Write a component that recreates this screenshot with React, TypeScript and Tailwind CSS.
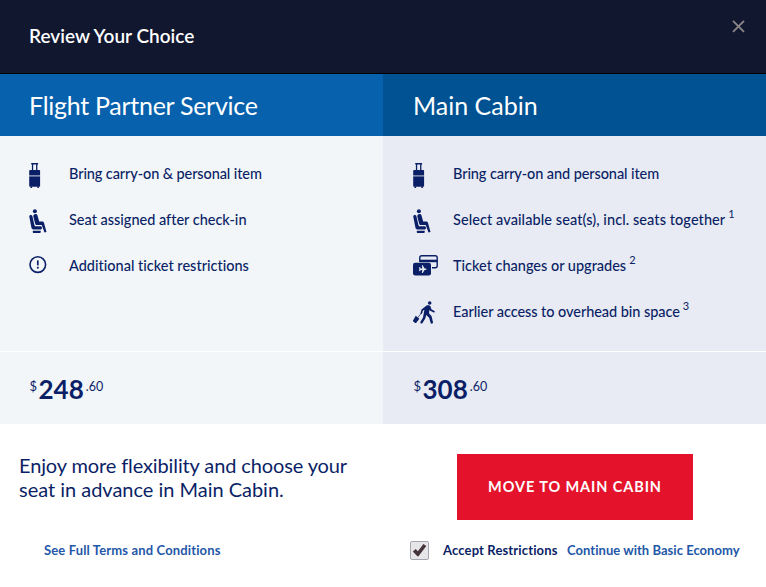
import { useState, type ReactNode } from "react";

function SuitcaseIcon() {
  return (
    <svg className="mt-[4px]" width="12" height="26" viewBox="0 0 12 26" fill="currentColor">
      <path d="M2.2 0h6.9v1.5h-.7V7H7.1V1.5H4.2V7H2.9V1.5h-.7z" />
      <path d="M1.4 7h8.7c.6 0 1 .4 1 1v4H.2V8c0-.6.6-1 1.2-1z" />
      <path d="M.2 13.6h10.9v9.2c0 .6-.4 1-1 1H1.4c-.6 0-1.2-.4-1.2-1z" />
      <path d="M1.5 23.5h1.6v1.5H1.5zM8.3 23.5h1.6v1.5H8.3z" />
      <path d="M.2 12h10.9v1.6H.2z" opacity=".5" />
    </svg>
  );
}

function SeatIcon() {
  return (
    <svg className="mt-[2px]" width="18" height="25" viewBox="0 0 18 25" fill="currentColor">
      <circle cx="5.9" cy="2.2" r="2" />
      <path d="M.3 7.7C0 5.8 2.9 5.4 3.4 7.3l2 8.7c.2.9.6 1.3 1.4 1.3h5c1.6 0 1.6 3.2 0 3.2H5.1c-1.5 0-2.4-.7-2.7-2.1z" />
      <path d="M4.3 7.5c-.4-2.6 3.5-3.4 4.2-.9l1.7 5.8h3c.9 0 1.4.4 1.7 1.2l2.6 9.4-2 .6-2.8-7.5H7.9c-1 0-1.5-.4-1.7-1.3z" />
      <path d="M3.8 21.7h7.9v1.2c0 .7-.4 1-1 1H4.8c-.7 0-1-.3-1-1z" />
    </svg>
  );
}

function AlertIcon() {
  return (
    <svg className="-mt-[3px]" width="18" height="18" viewBox="0 0 18 18" fill="none" stroke="currentColor">
      <circle cx="8.8" cy="8.6" r="7.8" strokeWidth="1.6" />
      <path d="M8.8 4.4v5" strokeWidth="1.7" />
      <path d="M8.8 10.8v1.8" strokeWidth="1.8" />
    </svg>
  );
}

function TicketsIcon() {
  return (
    <svg className="-mt-[2px]" width="25" height="21" viewBox="0 0 25 21" fill="none">
      <path
        d="M6.8 7V2.7c0-1.1.8-1.9 1.9-1.9h13.6c1.1 0 1.9.8 1.9 1.9v8.1c0 1.1-.8 1.9-1.9 1.9H19"
        stroke="currentColor"
        strokeWidth="1.4"
      />
      <path d="M6.8 4.7h17.4v2.5H6.8z" fill="currentColor" />
      <rect x="0" y="7.7" width="18" height="12.8" rx="2.3" fill="currentColor" />
      <path
        d="M6 12.2l1.1.1.7 1.2h1.5l-.5-3.2h.9l1.9 3.2h1c1.3.2 1.3 1.2 0 1.4h-1l-1.9 3.2h-.9l.5-3.2H7.8l-.7 1.2-1.1.1.4-2z"
        fill="#e8ebf3"
      />
    </svg>
  );
}

function TravelerIcon() {
  return (
    <svg width="23" height="23" viewBox="0 0 23 23" fill="currentColor">
      <circle cx="16.7" cy="2" r="1.8" />
      <path d="M13.6 4.5c1.3-.6 3.2-.4 3.8.8l1 2.9 3 1.9c.9.6.3 1.7-.7 1.3l-3.5-1.7-.7-1-.5 3.5 2.6 3 1.4 6c.3 1.5-1.9 2-2.4.6l-1.5-5.1-2.9-2.8-.9 3.5-2.8 4.6c-.8 1.2-2.8.2-2-1.2l2.5-4.3 1.4-7.8-1.5 1.1-1 2.8c-.4.9-1.6.5-1.4-.4l1-3.6z" />
      <path d="m9.2 11.2-4.5 5.5" stroke="currentColor" strokeWidth=".7" />
      <path d="m2.7 14.7 3.7 3-3.1 4.1c-.3.4-.7.4-1.1.1L.3 20.4c-.4-.3-.5-.7-.1-1.1z" />
    </svg>
  );
}

function CloseIcon() {
  return (
    <svg width="13" height="13" viewBox="0 0 13 13" fill="none" stroke="currentColor">
      <path d="m1 .8 11 11M12 .8l-11 11" strokeWidth="1.9" />
    </svg>
  );
}

function CheckIcon() {
  return (
    <svg width="15" height="14" viewBox="0 0 15 14" fill="currentColor">
      <path d="M.8 8.6 3.7 6l2.2 2.2L11.4.9l2.9 2.2-7.8 10.1H5.3z" />
    </svg>
  );
}

type Feature = {
  icon: ReactNode;
  label: string;
  note?: string;
  tracking: string;
};

const partnerFeatures: Feature[] = [
  { icon: <SuitcaseIcon />, label: "Bring carry-on & personal item", tracking: "tracking-[-0.1px]" },
  { icon: <SeatIcon />, label: "Seat assigned after check-in", tracking: "tracking-[-0.01px]" },
  { icon: <AlertIcon />, label: "Additional ticket restrictions", tracking: "tracking-normal" },
];

const cabinFeatures: Feature[] = [
  { icon: <SuitcaseIcon />, label: "Bring carry-on and personal item", tracking: "tracking-[-0.09px]" },
  {
    icon: <SeatIcon />,
    label: "Select available seat(s), incl. seats together",
    note: "1",
    tracking: "tracking-[0.08px]",
  },
  { icon: <TicketsIcon />, label: "Ticket changes or upgrades", note: "2", tracking: "tracking-[-0.01px]" },
  { icon: <TravelerIcon />, label: "Earlier access to overhead bin space", note: "3", tracking: "tracking-[-0.06px]" },
];

function FeatureList({ features }: { features: Feature[] }) {
  return (
    <ul className="h-[215px] pt-[15px]">
      {features.map((feature) => (
        <li key={feature.label} className="flex h-[46px] items-center">
          <span className="flex h-[28px] w-10 items-center">{feature.icon}</span>
          <span className={`text-[14.5px] leading-5 font-medium whitespace-nowrap ${feature.tracking}`}>
            {feature.label}
          </span>
          {feature.note && <span className="ml-[3px] pb-3 text-[11px] leading-3">{feature.note}</span>}
        </li>
      ))}
    </ul>
  );
}

function Price({ dollars, cents }: { dollars: string; cents: string }) {
  return (
    <div className="flex h-[72px] items-start pt-[22px]">
      <span className="w-[9px] pt-[4px] text-[13px] leading-4">$</span>
      <span className="text-[26px] leading-[30px] font-bold">{dollars}</span>
      <span className="ml-[2px] pt-[5px] text-[12.5px] leading-4">.{cents}</span>
    </div>
  );
}

export default function App() {
  const [accepted, setAccepted] = useState(true);

  return (
    <div className="h-[587px] w-[766px] bg-white font-[Lato,sans-serif] text-[#0b1f66] [font-variant-ligatures:none]">
      <header className="flex h-[74px] justify-between border-b border-black bg-[#11172f] pr-[21px] pl-[29px] text-white">
        <h1 className="pt-6 text-[19px] leading-6 font-semibold">Review Your Choice</h1>
        <button aria-label="Close" className="mt-5 h-[13px] text-[#8b8588]">
          <CloseIcon />
        </button>
      </header>

      <div className="grid grid-cols-2">
        <section className="bg-[#f2f6f9]">
          <h2 className="flex h-[62px] items-center bg-[#0761ad] pt-[2px] pl-[29px] text-[25px] tracking-[-0.28px] text-white">
            Flight Partner Service
          </h2>
          <div className="border-b border-white pl-[29px]">
            <FeatureList features={partnerFeatures} />
          </div>
          <div className="pl-[29.5px]">
            <Price dollars="248" cents="60" />
          </div>
        </section>
        <section className="bg-[#e8ebf3]">
          <h2 className="flex h-[62px] items-center bg-[#005293] pt-[2px] pl-[30px] text-[25px] text-white">
            Main Cabin
          </h2>
          <div className="border-b border-white pl-[30px]">
            <FeatureList features={cabinFeatures} />
          </div>
          <div className="pl-[30.5px]">
            <Price dollars="308" cents="60" />
          </div>
        </section>
      </div>

      <div className="flex justify-between pt-[30px] pr-[73px] pl-[19px]">
        <p className="-mt-px text-[20px] leading-6 tracking-[-0.12px] whitespace-nowrap">
          Enjoy more flexibility and choose your
          <br />
          <span className="tracking-[-0.02px]">seat in advance in Main Cabin.</span>
        </p>
        <button className="h-[66px] w-[236px] bg-[#e4132b] pb-px text-[14.5px] font-bold tracking-[0.9px] text-white">
          MOVE TO MAIN CABIN
        </button>
      </div>

      <div className="mt-[19px] flex items-center pl-[44px] text-[13px] leading-[22px] font-bold">
        <a href="#" className="w-[366px] shrink-0 tracking-[0.14px] text-[#2457a8]">
          See Full Terms and Conditions
        </a>
        <button
          role="checkbox"
          aria-checked={accepted}
          onClick={() => setAccepted(!accepted)}
          className="flex size-[19px] shrink-0 items-center justify-center rounded-[2px] border border-[#a6a6b0] bg-[#e6e6e9] text-[#46343d]"
        >
          {accepted && <CheckIcon />}
        </button>
        <span className="ml-[14px] w-[124px] shrink-0 tracking-[0.14px] whitespace-nowrap">Accept Restrictions</span>
        <a href="#" className="tracking-[0.04px] whitespace-nowrap text-[#2457a8]">
          Continue with Basic Economy
        </a>
      </div>
    </div>
  );
}
